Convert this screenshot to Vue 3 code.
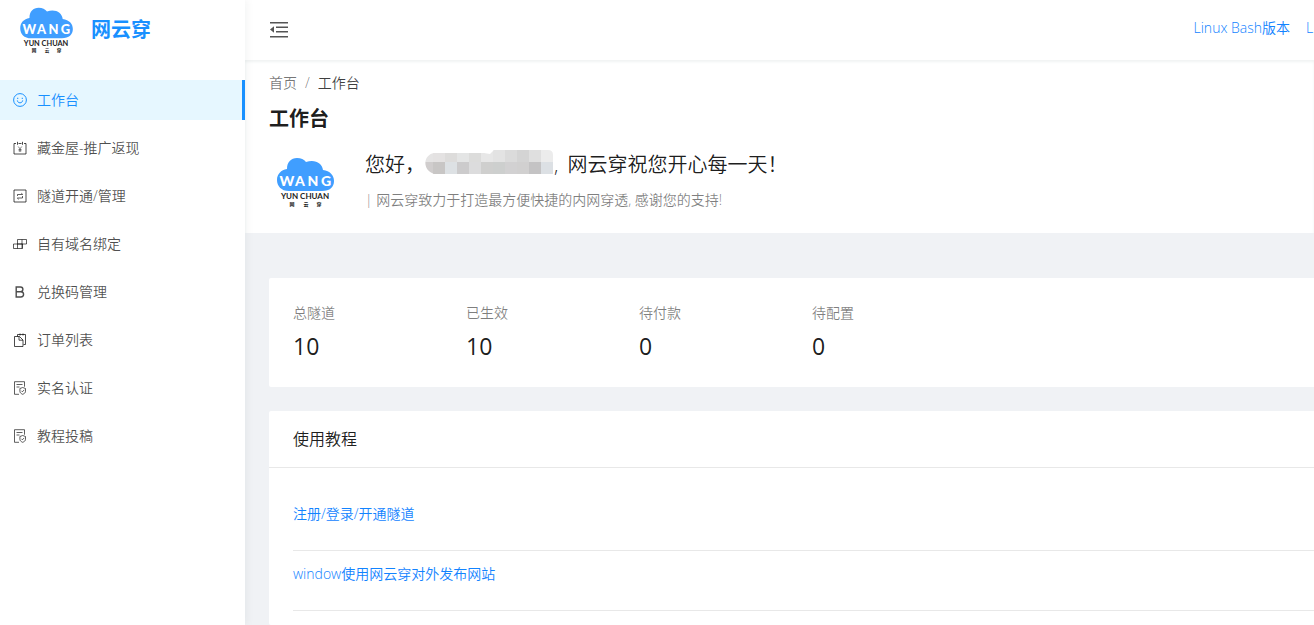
<script setup>
const menu = [
  { label: '工作台', icon: 'smile', active: true },
  { label: '藏金屋-推广返现', icon: 'money' },
  { label: '隧道开通/管理', icon: 'tunnel' },
  { label: '自有域名绑定', icon: 'blocks' },
  { label: '兑换码管理', icon: 'bold' },
  { label: '订单列表', icon: 'orders' },
  { label: '实名认证', icon: 'audit' },
  { label: '教程投稿', icon: 'audit' },
]
const stats = [
  { label: '总隧道', value: 10 },
  { label: '已生效', value: 10 },
  { label: '待付款', value: 0 },
  { label: '待配置', value: 0 },
]
const tutorials = ['注册/登录/开通隧道', 'window使用网云穿对外发布网站']
const top = ['#e5e4e4', '#e4e2e2', '#dddcdb', '#e4e5e5', '#dcdcdb', '#e7e7e7', '#e3e3e3', '#dbdbdb', '#d4d4d4', '#dfdfdf', '#ececec']
const bottom = ['#d0cdcd', '#c8c6c5', '#dde1e4', '#cccbcc', '#dcdcdd', '#cfcfce', '#cdcfce', '#d2d1d2', '#d1d0d0', '#c4c3c4', '#dce0e4']
</script>

<template>
  <svg class="defs" width="0" height="0" aria-hidden="true">
    <symbol id="logo" viewBox="12 8 58 52">
      <path fill="#409eff" d="M24 43C16 43 12 38 12 32c0-6 4-10 10-11C22 14 26 10 32 10c4 0 7 1.500 9 4 9-3 16 1 17 8 7 1 11 5 11 11 0 6-4 10-12 10Z" />
      <g class="l1" text-anchor="middle"><text x="22" y="38">W</text><text x="35" y="38">A</text><text x="48" y="38">N</text><text x="61" y="38">G</text></g>
      <text x="40" y="51" class="l2" text-anchor="middle">YUN CHUAN</text>
      <g class="l3" text-anchor="middle"><text x="27" y="58">网</text><text x="41" y="58">云</text><text x="54" y="58">穿</text></g>
    </symbol>
  </svg>
  <div class="layout">
    <aside class="sider">
      <a href="#" class="brand">
        <svg class="brand-logo" aria-hidden="true"><use href="#logo" /></svg>
        <span>网云穿</span>
      </a>
      <nav class="menu">
        <a v-for="m in menu" :key="m.label" href="#" class="item" :class="{ active: m.active }">
          <svg class="icon" viewBox="0 0 14 14" fill="none" stroke="currentColor" aria-hidden="true">
            <g v-if="m.icon === 'smile'"><circle cx="7" cy="7" r="6.400" /><path d="M4.300 7.400c.3 3.200 5.100 3.200 5.400 0" /><path d="M4 5.300h1.300M8.700 5.300H10" /></g>
            <g v-else-if="m.icon === 'money'"><path d="M3 2.500H1v10.500h12V2.500h-2M5.500 2.500h3M4.500 .8v3M9.500 .8v3" /><path d="M5.200 5.500l1.800 2.300 1.800-2.300M7 7.800V11M5.500 8.500h3M5.500 9.800h3" stroke-width=".7" /></g>
            <g v-else-if="m.icon === 'tunnel'"><path d="M1 1h12v12H1z" /><path d="M4.500 7V5.500h5M8.300 4.200l1.500 1.300M9.500 7v2h-5M5.700 10.300 4.200 9" stroke-width=".9" /></g>
            <g v-else-if="m.icon === 'blocks'" stroke-width=".9"><path d="M4.500 2.500h9v4.500h-9zM.5 7h9v4.500h-9zM9 2.500v9M4.500 7v4.500" /></g>
            <path v-else-if="m.icon === 'bold'" stroke-width="1.400" d="M3.200 2h4.300c3.200 0 3.200 4.700 0 4.700H3.200zM3.200 6.700h4.600c3.700 0 3.700 5.300 0 5.300H3.200z" />
            <g v-else-if="m.icon === 'orders'"><path d="M4.500 3.500v-2h8v10h-2M1.500 3.500h5l3.500 3.500v6.500H1.500zM6 3.500v3.700h4M7 .5v2M10 .5v2" /></g>
            <g v-else><path d="M6 13.300H1.500V.7h10v5M3.500 3.500h6M3.500 6h3" stroke-width=".9" /><path stroke-width=".9" d="M9.700 6.500l2.800 1v2.800c0 1.500-1.300 2.400-2.800 3-1.500-.6-2.800-1.500-2.800-3V7.500zM8.400 9.800l1 1 1.800-1.900" /></g>
          </svg>
          <span>{{ m.label }}</span>
        </a>
      </nav>
    </aside>
    <div class="main">
      <header class="topbar">
        <button class="fold" aria-label="收起菜单">
          <svg viewBox="0 0 20 18" aria-hidden="true"><path fill="currentColor" d="M1 1h18v1.500H1zM7 5.500h12V7H7zM7 10h12v1.500H7zM1 15h18v1.500H1zM1 8.500l4-3.200v6.400z" /></svg>
        </button>
        <nav class="links">
          <a href="#">Linux Bash版本</a>
          <a href="#" class="cut">Linux</a>
        </nav>
      </header>
      <section class="page-head">
        <nav class="crumbs"><a href="#">首页</a><span class="sep">/</span><span class="here">工作台</span></nav>
        <h1>工作台</h1>
        <div class="welcome">
          <svg class="avatar" aria-hidden="true"><use href="#logo" /></svg>
          <div>
            <p class="hello">您好，<svg class="mask" viewBox="0 0 129 24" aria-hidden="true">
              <clipPath id="blob"><path d="M9 24C-3 20-2 5 9 3h50l6 1 4-4h54q5 0 5 5v19z" /></clipPath>
              <g clip-path="url(#blob)">
                <rect v-for="(c, i) in top" :key="'t' + i" :x="i * 12 - 4" y="0" width="13" height="12" :fill="c" />
                <rect v-for="(c, i) in bottom" :key="'b' + i" :x="i * 12 - 4" y="12" width="13" height="12" :fill="c" />
              </g>
            </svg>, <span class="wish">网云穿祝您开心每一天！</span></p>
            <p class="sub">| 网云穿致力于打造最方便快捷的内网穿透, 感谢您的支持!</p>
          </div>
        </div>
      </section>
      <main class="content">
        <section class="card stats">
          <div v-for="s in stats" :key="s.label" class="stat">
            <div class="label">{{ s.label }}</div>
            <div class="value">{{ s.value }}</div>
          </div>
        </section>
        <section class="card guide">
          <h2>使用教程</h2>
          <ul>
            <li v-for="t in tutorials" :key="t"><a href="#">{{ t }}</a></li>
          </ul>
        </section>
      </main>
    </div>
  </div>
</template>

<style>
body { overflow-x: hidden; }
</style>

<style scoped>
.layout { display: flex; min-height: 100vh; background: #f0f2f5; color: rgba(0, 0, 0, .9); font: 14px/22px "Open Sans", "Noto Sans CJK SC", sans-serif; font-weight: 350; }
.defs { position: absolute; }
a { color: #1283ff; text-decoration: none; }
p, h1, h2, ul { margin: 0; padding: 0; }
.l1 { font: 900 14px Lato, sans-serif; fill: #fff; }
.l2 { font: bold 8px Lato, sans-serif; fill: #222; }
.l3 { font: bold 5px "Noto Sans CJK SC", sans-serif; fill: #222; }
.sider { flex: 0 0 245px; background: #fff; box-shadow: 2px 0 8px rgba(29, 35, 41, .05); z-index: 2; }
.brand { display: flex; align-items: center; height: 60px; padding-left: 20px; gap: 17px; color: #1890ff; font-size: 20px; font-weight: 700; }
.brand-logo { width: 54px; height: 48px; }
.menu { display: flex; flex-direction: column; gap: 8px; padding-top: 20px; }
.item { display: flex; align-items: center; gap: 10px; height: 40px; padding-left: 13px; color: rgba(0, 0, 0, .7); }
.item.active { color: #1890ff; background: #e6f7ff; border-right: 3px solid #1890ff; }
.icon { width: 14px; height: 14px; flex: none; }
.main { display: flex; flex-direction: column; flex: 1; min-width: 0; }
.topbar { display: flex; align-items: center; justify-content: space-between; height: 60px; padding-left: 24px; overflow: hidden; background: #fff; }
.fold { display: flex; padding: 0; border: 0; background: none; color: #555; }
.fold svg { width: 20px; height: 18px; }
.links { display: flex; gap: 16px; padding-bottom: 4px; white-space: nowrap; }
.cut { width: 8px; }
.page-head { padding: 12px 24px 22px; background: #fff; box-shadow: inset 0 2px 3px #f0f3f3; }
.crumbs { display: flex; gap: 8px; color: rgba(0, 0, 0, .55); }
.crumbs a { color: inherit; }
.here { color: rgba(0, 0, 0, .75); }
h1 { margin-top: 9px; font-size: 20px; line-height: 32px; font-weight: 700; }
.welcome { display: flex; gap: 30px; padding: 12px 0 0 8px; }
.avatar { width: 58px; height: 52px; margin-top: 9px; }
.hello { font-size: 20px; line-height: 36px; height: 36px; white-space: nowrap; }
.wish { margin-left: 4px; }
.mask { width: 129px; height: 24px; vertical-align: -2px; }
.sub { margin-top: 6px; color: rgba(0, 0, 0, .5); }
.content { display: flex; flex-direction: column; flex: 1; gap: 24px; padding: 45px 0 0 24px; }
.card { background: #fff; border-radius: 2px 0 0 2px; }
.stats { display: flex; padding: 24px; }
.guide { flex: 1; }
.stat { width: 173px; }
.label { color: rgba(0, 0, 0, .5); }
.value { padding-top: 5px; font-size: 23px; line-height: 34px; font-weight: 400; }
h2 { padding: 16px 24px; font-size: 16px; line-height: 24px; font-weight: inherit; border-bottom: 1px solid #e8e8e8; }
ul { padding: 23px 0 0 24px; list-style: none; }
li { padding: 12px 0 25px; border-bottom: 1px solid #e8e8e8; }
</style>
